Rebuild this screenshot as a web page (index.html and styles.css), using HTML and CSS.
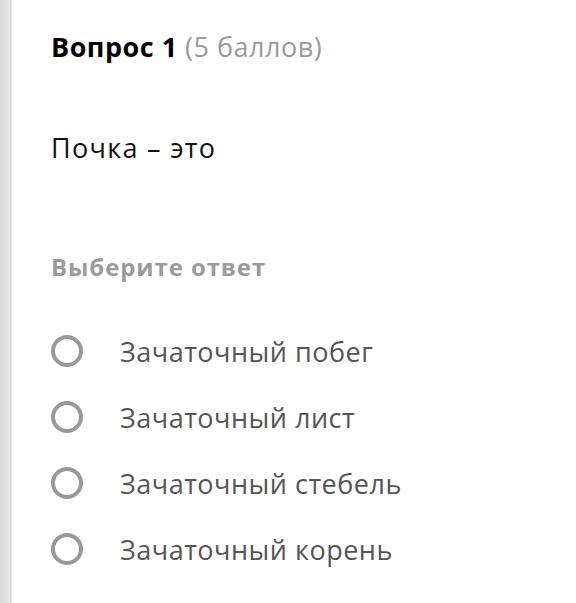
FILE: index.html
```html
<!DOCTYPE html>
<html lang="ru">
<head>
    <meta charset="UTF-8">
    <meta name="viewport" content="width=device-width, initial-scale=1.0">
    <title>Вопрос 1</title>
    <link rel="stylesheet" href="styles.css">
</head>
<body>
    <div class="page">
        <div class="edge"></div>

        <div class="question">
            <h2 class="title">Вопрос 1 <span>(5 баллов)</span></h2>
            <p class="text">Почка – это</p>

            <h3 class="hint">Выберите ответ</h3>

            <ul class="answers">
                <li><span class="radio"></span>Зачаточный побег</li>
                <li><span class="radio"></span>Зачаточный лист</li>
                <li><span class="radio"></span>Зачаточный стебель</li>
                <li><span class="radio"></span>Зачаточный корень</li>
            </ul>
        </div>
    </div>
</body>
</html>
```
FILE: styles.css
```css
body {
  margin: 0;
  background: #fff;
  font-family: "Open Sans", "Noto Sans", sans-serif;
}

.page {
  display: flex;
  min-height: 603px;
}

.edge {
  width: 12px;
  flex-shrink: 0;
  background: linear-gradient(to right, #d9d9d9, #e6e6e6 80%, #d2d2d2 85%, #f4f4f4);
}

.question {
  padding: 29px 0 0 39px;
}

.title {
  margin: 0;
  font-size: 27px;
  line-height: 36px;
  letter-spacing: 0.5px;
  font-weight: 700;
  color: #000;
}

.title span {
  font-weight: 400;
  color: #9a9a9a;
}

.text {
  margin: 65px 0 0;
  font-size: 27px;
  line-height: 36px;
  letter-spacing: 1.3px;
  color: #111;
}

.hint {
  margin: 85px 0 0;
  font-size: 24px;
  line-height: 32px;
  letter-spacing: 0.9px;
  font-weight: 700;
  color: #9b9b9b;
}

.answers {
  list-style: none;
  margin: 35px 0 0;
  padding: 0;
}

.answers li {
  display: flex;
  align-items: center;
  height: 66px;
  font-size: 27px;
  letter-spacing: 0.5px;
  color: #555;
}

.radio {
  width: 24px;
  height: 24px;
  border: 4px solid #999;
  border-radius: 50%;
  margin-right: 37px;
  flex-shrink: 0;
}
```
